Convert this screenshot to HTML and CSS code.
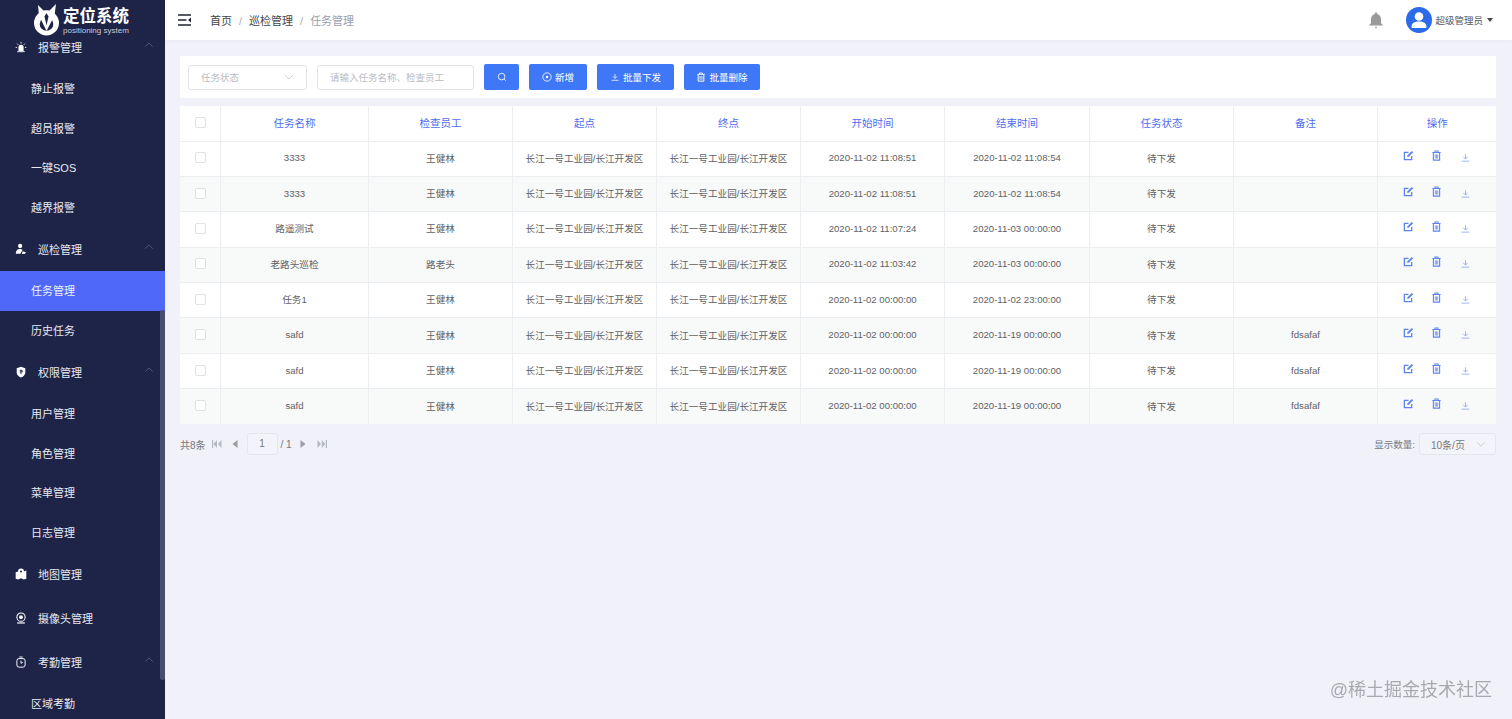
FILE: index.html
```html
<!DOCTYPE html>
<html lang="en">
<head>
    <meta charset="UTF-8">
    <title>任务管理</title>
    <link rel="stylesheet" href="styles.css">
</head>
<body>
    <svg class="sprite" width="0" height="0">
        <symbol id="i-edit" viewBox="0 0 12 12">
            <path d="M9.500 6.500V10.500H1.500V2.500H6" fill="none" stroke="currentColor" stroke-width="1.400"/>
            <path d="M4.600 5.900L9.600 1l1.500 1.500L6.200 7.400H4.600z" fill="currentColor"/>
        </symbol>
        <symbol id="i-trash" viewBox="0 0 12 12">
            <path d="M1.500 2.800h9M4.300 2.600V1.200h3.400v1.400" fill="none" stroke="currentColor" stroke-width="1.100"/>
            <path d="M2.600 3.200v7.800h6.800V3.200" fill="none" stroke="currentColor" stroke-width="1.200"/>
            <path d="M4.700 4.800v4.500M6 4.800v4.500M7.300 4.800v4.500" stroke="currentColor" stroke-width=".8"/>
        </symbol>
        <symbol id="i-down" viewBox="0 0 12 12">
            <path d="M6 2.500v5M3.600 5.300L6 7.700l2.400-2.400M1.800 10h8.400" fill="none" stroke="currentColor" stroke-width=".9"/>
        </symbol>
        <symbol id="i-chev" viewBox="0 0 12 12">
            <path d="M1.500 8L6 3.500 10.500 8" fill="none" stroke="currentColor" stroke-width="1"/>
        </symbol>
    </svg>

    <div class="layout">
        <aside class="sidebar">
            <div class="logo">
                <svg class="logo-mark" viewBox="0 0 28 32" width="28" height="32">
                    <circle cx="13.500" cy="19" r="12.500" fill="#fff"/>
                    <circle cx="13.500" cy="20" r="6.800" fill="#1e2448"/>
                    <path d="M5 1l5.500 5.500h6L23 0l-1.500 11.500L13.500 27 6 11.500z" fill="#fff"/>
                    <path d="M13.500 9l2 3.500-2 9-2-9z" fill="#1e2448"/>
                </svg>
                <div class="logo-text">
                    <div class="logo-name">定位系统</div>
                    <div class="logo-sub">positioning system</div>
                </div>
            </div>
            <nav class="menu">
                <div class="menu-group">
                    <svg class="menu-icon" viewBox="0 0 14 14"><path d="M4 12V7.500a3 3 0 0 1 6 0V12z" fill="#fff"/><path d="M2.500 12.500h9M7 1v2M2.500 3l1.300 1.500M11.500 3l-1.300 1.500M.8 7.500h1.600M11.600 7.500h1.600" stroke="#fff" stroke-width="1"/></svg>
                    <span>报警管理</span>
                    <svg class="menu-arrow"><use href="#i-chev"/></svg>
                </div>
                <a class="menu-item">静止报警</a>
                <a class="menu-item">超员报警</a>
                <a class="menu-item">一键SOS</a>
                <a class="menu-item">越界报警</a>
                <div class="menu-group">
                    <svg class="menu-icon" viewBox="0 0 14 14"><circle cx="6" cy="3.500" r="2.500" fill="#fff"/><path d="M1 12.500c0-4 2-5.500 5-5.500 1 0 2 .3 2.800 .8L6.500 12.500z" fill="#fff"/><path d="M9 9.500l4 1.500-2 1.800H8z" fill="#fff"/></svg>
                    <span>巡检管理</span>
                    <svg class="menu-arrow"><use href="#i-chev"/></svg>
                </div>
                <a class="menu-item active">任务管理</a>
                <a class="menu-item">历史任务</a>
                <div class="menu-group">
                    <svg class="menu-icon" viewBox="0 0 14 14"><path d="M7 .800l5 1.700v5c0 2.800-2.200 4.700-5 5.800-2.800-1.100-5-3-5-5.800v-5z" fill="#fff"/><path d="M7 4v5.500M5.500 5.500h3v1.500h-3" fill="none" stroke="#1e2448" stroke-width="1"/></svg>
                    <span>权限管理</span>
                    <svg class="menu-arrow"><use href="#i-chev"/></svg>
                </div>
                <a class="menu-item">用户管理</a>
                <a class="menu-item">角色管理</a>
                <a class="menu-item">菜单管理</a>
                <a class="menu-item">日志管理</a>
                <div class="menu-group">
                    <svg class="menu-icon" viewBox="0 0 14 14"><path d="M.800 5l3-1 3.200 5 3.200-5 3-1v9.500l-3 1-3.200-1.500-3.200 1.500-3-1z" fill="#fff"/><path d="M7 .500a3.500 3.500 0 0 1 3.500 3.500C10.500 6 8.500 8 7 9.500 5.500 8 3.500 6 3.500 4A3.500 3.500 0 0 1 7 .500z" fill="#fff"/><circle cx="7" cy="4" r="1.200" fill="#1e2448"/></svg>
                    <span>地图管理</span>
                </div>
                <div class="menu-group">
                    <svg class="menu-icon" viewBox="0 0 14 14"><circle cx="7" cy="6" r="4.800" fill="none" stroke="#fff" stroke-width="1.200"/><circle cx="7" cy="6" r="2.200" fill="#fff"/><path d="M2.500 12.800h9" stroke="#fff" stroke-width="1.400"/></svg>
                    <span>摄像头管理</span>
                </div>
                <div class="menu-group">
                    <svg class="menu-icon" viewBox="0 0 14 14"><rect x="2.200" y="3" width="9.600" height="10" rx="2.500" fill="none" stroke="#fff" stroke-width="1.100"/><path d="M5 1.200h4M7 5.500v3l2-1" fill="none" stroke="#fff" stroke-width="1.100"/></svg>
                    <span>考勤管理</span>
                    <svg class="menu-arrow"><use href="#i-chev"/></svg>
                </div>
                <a class="menu-item">区域考勤</a>
            </nav>
            <div class="sidebar-scroll"></div>
        </aside>

        <div class="content">
            <header class="topbar">
                <svg class="fold" viewBox="0 0 13 12" width="13" height="12"><path d="M0 1h13M0 6h8.500M0 11h13" stroke="#1f2230" stroke-width="1.600"/><path d="M13 3.500v5L10 6z" fill="#1f2230"/></svg>
                <div class="crumbs">
                    <span>首页</span><i>/</i><span>巡检管理</span><i>/</i><span class="crumb-now">任务管理</span>
                </div>
                <div class="topbar-right">
                    <svg class="bell" viewBox="0 0 16 17" width="16" height="17"><path d="M8 0.500a1.300 1.300 0 0 1 1.300 1.400C11.800 2.500 13 4.500 13 7.500v3.500l2 2.500H1l2-2.500V7.500c0-3 1.200-5 3.700-5.600A1.300 1.300 0 0 1 8 0.500z" fill="#9a9a9c"/><path d="M6.500 14.800h3L8 16.500z" fill="#9a9a9c"/></svg>
                    <svg class="avatar" viewBox="0 0 26 26" width="26" height="26"><circle cx="13" cy="13" r="13" fill="#2b6ae8"/><circle cx="13" cy="9.500" r="4.300" fill="#fff"/><path d="M5.500 20c0-3.800 3-5.500 7.500-5.500s7.500 1.700 7.500 5.500c0 .6-.4 1-1 1h-13c-.6 0-1-.4-1-1z" fill="#fff"/></svg>
                    <span class="user-name">超级管理员</span>
                    <span class="caret"></span>
                </div>
            </header>

            <main class="page">
                <div class="toolbar">
                    <div class="field field-select">
                        <span>任务状态</span>
                        <svg class="field-arrow"><use href="#i-chev"/></svg>
                    </div>
                    <div class="field field-input"><span>请输入任务名称、检查员工</span></div>
                    <button class="btn btn-search">
                        <svg viewBox="0 0 12 12" width="10" height="10"><circle cx="5.500" cy="5.500" r="4" fill="none" stroke="#fff" stroke-width="1"/><path d="M8.500 8.500l2 2" stroke="#fff" stroke-width="1"/></svg>
                    </button>
                    <button class="btn btn-add">
                        <svg viewBox="0 0 12 12" width="10" height="10"><circle cx="6" cy="6" r="5" fill="none" stroke="#fff" stroke-width="1"/><circle cx="6" cy="6" r="1.500" fill="#fff"/></svg>新增
                    </button>
                    <button class="btn btn-send">
                        <svg width="10" height="10" color="#fff"><use href="#i-down"/></svg>批量下发
                    </button>
                    <button class="btn btn-del">
                        <svg width="10" height="10" color="#fff"><use href="#i-trash"/></svg>批量删除
                    </button>
                </div>

                <table class="grid">
                    <colgroup>
                        <col class="c-check"><col class="c-name"><col class="c-std"><col class="c-std"><col class="c-std"><col class="c-std"><col class="c-wide"><col class="c-std"><col class="c-std"><col>
                    </colgroup>
                    <thead>
                        <tr>
                            <th><span class="check"></span></th>
                            <th>任务名称</th><th>检查员工</th><th>起点</th><th>终点</th><th>开始时间</th><th>结束时间</th><th>任务状态</th><th>备注</th><th>操作</th>
                        </tr>
                    </thead>
                    <tbody>
                        <tr>
                            <td><span class="check"></span></td><td>3333</td><td>王健林</td><td>长江一号工业园/长江开发区</td><td>长江一号工业园/长江开发区</td><td>2020-11-02 11:08:51</td><td>2020-11-02 11:08:54</td><td>待下发</td><td></td>
                            <td class="ops"><svg><use href="#i-edit"/></svg><svg><use href="#i-trash"/></svg><svg class="op-down"><use href="#i-down"/></svg></td>
                        </tr>
                        <tr>
                            <td><span class="check"></span></td><td>3333</td><td>王健林</td><td>长江一号工业园/长江开发区</td><td>长江一号工业园/长江开发区</td><td>2020-11-02 11:08:51</td><td>2020-11-02 11:08:54</td><td>待下发</td><td></td>
                            <td class="ops"><svg><use href="#i-edit"/></svg><svg><use href="#i-trash"/></svg><svg class="op-down"><use href="#i-down"/></svg></td>
                        </tr>
                        <tr>
                            <td><span class="check"></span></td><td>路遥测试</td><td>王健林</td><td>长江一号工业园/长江开发区</td><td>长江一号工业园/长江开发区</td><td>2020-11-02 11:07:24</td><td>2020-11-03 00:00:00</td><td>待下发</td><td></td>
                            <td class="ops"><svg><use href="#i-edit"/></svg><svg><use href="#i-trash"/></svg><svg class="op-down"><use href="#i-down"/></svg></td>
                        </tr>
                        <tr>
                            <td><span class="check"></span></td><td>老路头巡检</td><td>路老头</td><td>长江一号工业园/长江开发区</td><td>长江一号工业园/长江开发区</td><td>2020-11-02 11:03:42</td><td>2020-11-03 00:00:00</td><td>待下发</td><td></td>
                            <td class="ops"><svg><use href="#i-edit"/></svg><svg><use href="#i-trash"/></svg><svg class="op-down"><use href="#i-down"/></svg></td>
                        </tr>
                        <tr>
                            <td><span class="check"></span></td><td>任务1</td><td>王健林</td><td>长江一号工业园/长江开发区</td><td>长江一号工业园/长江开发区</td><td>2020-11-02 00:00:00</td><td>2020-11-02 23:00:00</td><td>待下发</td><td></td>
                            <td class="ops"><svg><use href="#i-edit"/></svg><svg><use href="#i-trash"/></svg><svg class="op-down"><use href="#i-down"/></svg></td>
                        </tr>
                        <tr>
                            <td><span class="check"></span></td><td>safd</td><td>王健林</td><td>长江一号工业园/长江开发区</td><td>长江一号工业园/长江开发区</td><td>2020-11-02 00:00:00</td><td>2020-11-19 00:00:00</td><td>待下发</td><td>fdsafaf</td>
                            <td class="ops"><svg><use href="#i-edit"/></svg><svg><use href="#i-trash"/></svg><svg class="op-down"><use href="#i-down"/></svg></td>
                        </tr>
                        <tr>
                            <td><span class="check"></span></td><td>safd</td><td>王健林</td><td>长江一号工业园/长江开发区</td><td>长江一号工业园/长江开发区</td><td>2020-11-02 00:00:00</td><td>2020-11-19 00:00:00</td><td>待下发</td><td>fdsafaf</td>
                            <td class="ops"><svg><use href="#i-edit"/></svg><svg><use href="#i-trash"/></svg><svg class="op-down"><use href="#i-down"/></svg></td>
                        </tr>
                        <tr>
                            <td><span class="check"></span></td><td>safd</td><td>王健林</td><td>长江一号工业园/长江开发区</td><td>长江一号工业园/长江开发区</td><td>2020-11-02 00:00:00</td><td>2020-11-19 00:00:00</td><td>待下发</td><td>fdsafaf</td>
                            <td class="ops"><svg><use href="#i-edit"/></svg><svg><use href="#i-trash"/></svg><svg class="op-down"><use href="#i-down"/></svg></td>
                        </tr>
                    </tbody>
                </table>

                <div class="pager">
                    <span class="pager-total">共8条</span>
                    <svg class="pg-icon pg-first" viewBox="0 0 10 8"><path d="M0 0h1.200v8H0zM5 0v8L1.500 4zM9.500 0v8L6 4z"/></svg>
                    <svg class="pg-icon pg-prev" viewBox="0 0 6 8"><path d="M5.500 0v8L.5 4z"/></svg>
                    <span class="pg-num">1</span>
                    <span class="pg-of">/ 1</span>
                    <svg class="pg-icon pg-next" viewBox="0 0 6 8"><path d="M.5 0v8l5-4z"/></svg>
                    <svg class="pg-icon pg-last" viewBox="0 0 10 8"><path d="M.5 0v8L4 4zM4.800 0v8l3.500-4zM8.800 0H10v8H8.800z"/></svg>
                    <span class="pager-size">显示数量:</span>
                    <div class="size-select">
                        <span>10条/页</span>
                        <svg class="field-arrow"><use href="#i-chev"/></svg>
                    </div>
                </div>
            </main>
        </div>
    </div>

    <div class="watermark">@稀土掘金技术社区</div>
</body>
</html>
```

FILE: styles.css
```css
* {
    box-sizing: border-box;
}
html, body {
    height: 100%;
}
body {
    margin: 0;
    background: #f0f1f9;
    color: #606266;
    font-family: "Liberation Sans", "Noto Sans CJK SC", sans-serif;
    font-size: 9.5px;
    overflow: hidden;
}
.sprite {
    position: absolute;
}
.layout {
    display: flex;
    height: 100%;
}

/* Sidebar */
.sidebar {
    position: relative;
    width: 165px;
    flex-shrink: 0;
    background: #1e2448;
    color: #e8e9f0;
    overflow: hidden;
}
.logo {
    display: flex;
    gap: 2px;
    height: 36px;
    padding: 4px 0 0 33px;
    position: relative;
    z-index: 1;
}
.logo-mark {
    flex-shrink: 0;
}
.logo-text {
    padding-top: 2px;
    color: #fff;
}
.logo-name {
    font-size: 16.500px;
    font-weight: bold;
    line-height: 20px;
}
.logo-sub {
    font-size: 8px;
    line-height: 9px;
    color: #c8cad6;
    white-space: nowrap;
}
.menu {
    margin-top: -11px;
}
.menu-group {
    display: flex;
    align-items: center;
    height: 44px;
    padding-left: 15px;
    font-size: 11px;
}
.menu-group span {
    margin-left: 11px;
}
.menu-icon {
    width: 12px;
    height: 12px;
    flex-shrink: 0;
}
.menu-arrow {
    width: 10px;
    height: 10px;
    margin-left: auto;
    margin-right: 11px;
    margin-top: -4px;
    color: #5a5f7e;
}
.menu-item {
    display: block;
    height: 39.500px;
    line-height: 41px;
    padding-left: 31px;
    font-size: 11px;
}
.menu-item.active {
    background: #4f68f7;
    color: #eef0ff;
}
.sidebar-scroll {
    position: absolute;
    right: 0;
    top: 310px;
    width: 5px;
    height: 370px;
    border-radius: 3px;
    background: #4a4e6e;
}

/* Top bar */
.content {
    flex: 1;
    min-width: 0;
}
.topbar {
    display: flex;
    align-items: center;
    height: 40px;
    padding: 0 19px 0 13px;
    background: #fff;
    box-shadow: 0 1px 4px rgba(0, 0, 0, 0.04);
}
.crumbs {
    margin-left: 19px;
    font-size: 11px;
    color: #44464d;
}
.crumbs i {
    font-style: normal;
    margin: 0 7px;
    color: #a8abb2;
}
.crumb-now {
    color: #97a0b0;
}
.topbar-right {
    display: flex;
    align-items: center;
    margin-left: auto;
}
.bell {
    margin-right: 22px;
}
.user-name {
    margin-left: 3px;
    font-size: 9.500px;
    color: #55575e;
}
.caret {
    margin-left: 4px;
    border-top: 4px solid #44464d;
    border-left: 3px solid transparent;
    border-right: 3px solid transparent;
}

/* Main */
.page {
    padding: 16px 16px 0 15px;
}
.toolbar {
    display: flex;
    align-items: center;
    height: 42px;
    padding: 0 8px;
    background: #fff;
}
.field {
    display: flex;
    align-items: center;
    height: 25px;
    padding: 0 12px;
    background: #fff;
    border: 1px solid #e2e4ea;
    border-radius: 3px;
    color: #b9bcc4;
}
.field-select {
    width: 119px;
}
.field-input {
    width: 157px;
    margin-left: 10px;
}
.field-arrow {
    width: 10px;
    height: 10px;
    margin-left: auto;
    transform: rotate(180deg);
    color: #c4c7cf;
}
.btn {
    display: flex;
    align-items: center;
    justify-content: center;
    gap: 3px;
    height: 26px;
    margin-left: 10px;
    padding: 0;
    background: #3f78f6;
    border: 0;
    border-radius: 2px;
    color: #fff;
    font-family: inherit;
    font-size: 9.500px;
}
.btn-search {
    width: 35px;
}
.btn-add {
    width: 58px;
}
.btn-send {
    width: 77px;
}
.btn-del {
    width: 76px;
}

/* Table */
.grid {
    width: 100%;
    margin-top: 8px;
    table-layout: fixed;
    border-collapse: collapse;
    background: #fff;
}
.c-check {
    width: 40px;
}
.c-name {
    width: 148px;
}
.c-std {
    width: 144px;
}
.c-wide {
    width: 145px;
}
.grid th, .grid td {
    padding: 0 0 2px 1px;
    border: 1px solid #ebedf1;
    text-align: center;
    font-weight: normal;
}
.grid tr > :first-child {
    border-left: 0;
}
.grid tr > :last-child {
    border-right: 0;
}
.grid thead tr > *, .grid tbody tr:first-child > * {
    border-top: 0;
}
.grid tbody tr:last-child > * {
    border-bottom: 0;
}
.grid th {
    height: 35px;
    color: #4d6ef0;
    font-size: 10.500px;
}
.grid td {
    height: 35.400px;
    color: #606266;
    font-size: 9.600px;
}
.grid tbody tr:nth-child(even), .grid tbody tr:nth-child(6) {
    background: #f8f9f9;
}
.grid tbody tr:nth-child(7) {
    background: #fff;
}
.check {
    display: block;
    width: 11px;
    height: 11px;
    margin: 0 auto;
    border: 1px solid #dfe1e6;
    border-radius: 2px;
    background: #fff;
}
.grid td.ops {
    padding-left: 0;
    color: #5b84f1;
}
.ops svg {
    width: 11px;
    height: 11px;
    margin: 0 8.500px;
    vertical-align: 2px;
}
.ops .op-down {
    margin-left: 9.500px;
    vertical-align: 0;
    color: #8ba8f4;
}

/* Pagination */
.pager {
    display: flex;
    align-items: center;
    height: 22px;
    margin-top: 9px;
    color: #77797f;
}
.pager-total {
    font-size: 10px;
}
.pg-icon {
    height: 8px;
    fill: #b4b7c0;
}
.pg-first {
    width: 10px;
    margin-left: 6px;
}
.pg-prev {
    width: 6px;
    margin-left: 10px;
    fill: #9a9da6;
}
.pg-num {
    width: 31px;
    height: 22px;
    margin-left: 9px;
    line-height: 20px;
    text-align: center;
    border: 1px solid #e4e6ee;
    border-radius: 3px;
    background: #f3f4fa;
    font-size: 10px;
}
.pg-of {
    margin-left: 3px;
    font-size: 10px;
}
.pg-next {
    width: 6px;
    margin-left: 8px;
    fill: #9a9da6;
}
.pg-last {
    width: 10px;
    margin-left: 11px;
}
.pager-size {
    margin-left: auto;
    color: #77797f;
}
.size-select {
    display: flex;
    align-items: center;
    width: 77px;
    height: 22px;
    margin-left: 4px;
    padding: 0 9px 0 11px;
    border: 1px solid #e4e6ee;
    border-radius: 3px;
    background: #f3f4fa;
    color: #77797f;
    font-size: 10px;
}

.watermark {
    position: fixed;
    right: 20px;
    bottom: 17px;
    font-size: 18px;
    line-height: 24px;
    color: rgba(110, 110, 115, 0.55);
}
```
